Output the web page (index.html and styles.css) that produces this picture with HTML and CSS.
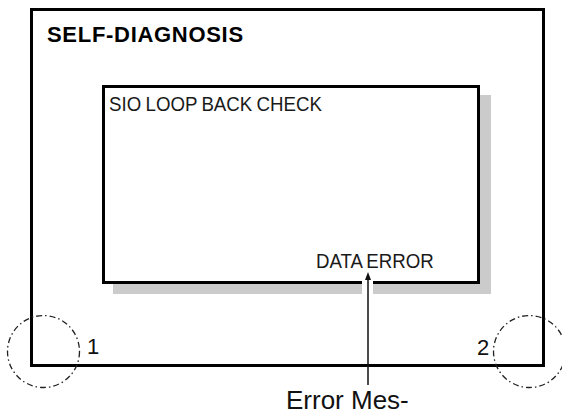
FILE: index.html
```html
<!DOCTYPE html>
<html>
<head>
<meta charset="utf-8">
<link rel="stylesheet" href="styles.css">
</head>
<body>
<div class="page">
  <div class="outer">
    <div class="title">SELF-DIAGNOSIS</div>
    <div class="screen">
      <div class="screen-line"><span class="narrow">SIO LOOP BACK CHECK</span></div>
      <div class="screen-line msg"><span class="narrow">DATA ERROR</span></div>
    </div>
  </div>
  <svg class="marks" width="562" height="414" viewBox="0 0 562 414">
    <rect x="362" y="279" width="11" height="17" fill="#fff"/>
    <line x1="368" y1="278" x2="368" y2="385" stroke="#111" stroke-width="1.5"/>
    <polygon points="368,272 365,280 371,280" fill="#111"/>
    <circle cx="43.5" cy="351.5" r="36" fill="none" stroke="#222" stroke-width="1.3" stroke-dasharray="6 3 1.5 3"/>
    <circle cx="529.5" cy="351.5" r="36" fill="none" stroke="#222" stroke-width="1.3" stroke-dasharray="6 3 1.5 3"/>
  </svg>
  <span class="label label-1">1</span>
  <span class="label label-2">2</span>
  <span class="caption">Error Mes-</span>
</div>
</body>
</html>
```
FILE: styles.css
```css
html, body {
  margin: 0;
  padding: 0;
  background: #fff;
}
.page {
  position: relative;
  width: 562px;
  height: 414px;
  overflow: hidden;
  font-family: "Liberation Sans", Arial, sans-serif;
  color: #111;
}
.outer {
  position: absolute;
  left: 30px;
  top: 8px;
  width: 515px;
  height: 359px;
  box-sizing: border-box;
  border: 3px solid #000;
  padding: 13px 0 0 14px;
}
.title {
  font-weight: bold;
  font-size: 22px;
  line-height: 22px;
  letter-spacing: 0.7px;
  color: #000;
}
.screen {
  margin: 39px 0 0 55px;
  width: 378px;
  height: 199px;
  box-sizing: border-box;
  border: 3px solid #000;
  background: #fff;
  box-shadow: 11px 10px 0 #cbcbcb;
  display: flex;
  flex-direction: column;
  justify-content: space-between;
  padding: 5px 0 10px 4px;
}
.screen-line {
  font-family: "Liberation Sans", Arial, sans-serif;
  font-size: 21px;
  line-height: 21px;
  color: #1a1a1a;
  white-space: nowrap;
}
.narrow {
  display: inline-block;
  transform: scaleX(0.89);
  transform-origin: left center;
  word-spacing: -1px;
}
.msg {
  margin-left: 207px;
}
.marks {
  position: absolute;
  left: 0;
  top: 0;
}
.label {
  position: absolute;
  font-size: 22px;
  line-height: 22px;
  color: #111;
}
.label-1 {
  left: 87px;
  top: 336px;
}
.label-2 {
  left: 477px;
  top: 337px;
}
.caption {
  position: absolute;
  left: 286px;
  top: 387px;
  font-size: 26px;
  line-height: 26px;
  color: #111;
  white-space: nowrap;
}
```
